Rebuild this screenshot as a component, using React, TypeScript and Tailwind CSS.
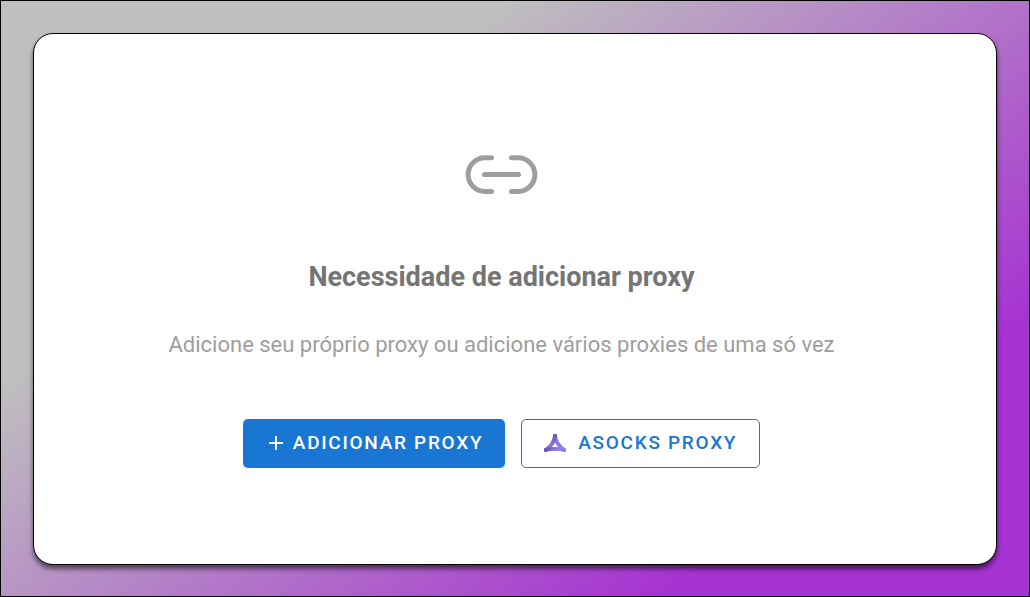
function LinkIcon() {
  return (
    <svg aria-hidden="true" viewBox="0 0 74 40" className="h-10 w-[74px]" fill="none" stroke="#9e9e9e" strokeWidth="5" strokeLinecap="round">
      <path d="M26.5 2.7H20a16.900 16.900 0 0 0 0 33.800h6.500" />
      <path d="M46.5 2.7H53a16.900 16.900 0 0 1 0 33.800h-6.500" />
      <path d="M19.500 19.600h34" />
    </svg>
  );
}

function PlusIcon() {
  return (
    <svg aria-hidden="true" viewBox="0 0 22 22" className="size-[22px]" fill="none" stroke="currentColor" strokeWidth="1.900">
      <path d="M11 4v14M4 11h14" />
    </svg>
  );
}

function AsocksLogo() {
  return (
    <svg aria-hidden="true" viewBox="0 0 22 18" className="h-[18px] w-[22px]" fill="none" strokeLinecap="round">
      <defs>
        <linearGradient id="asocks-left" x1="11" y1="0" x2="2" y2="17" gradientUnits="userSpaceOnUse">
          <stop offset="0" stopColor="#6858a8" />
          <stop offset="0.6" stopColor="#8a72d8" />
          <stop offset="1" stopColor="#6650b4" />
        </linearGradient>
        <linearGradient id="asocks-base" x1="1" y1="16" x2="21" y2="16" gradientUnits="userSpaceOnUse">
          <stop offset="0" stopColor="#6f5abf" />
          <stop offset="1" stopColor="#a38cf5" />
        </linearGradient>
      </defs>
      <path d="M1.800 16C6.500 14.400 15.500 14.400 20.200 16" stroke="url(#asocks-base)" strokeWidth="3.800" />
      <path d="M11 1.800C11.400 6.500 14.800 12.800 20.200 15.900" stroke="#927be3" strokeWidth="4" />
      <path d="M11 1.800C10.600 6.500 7.200 12.800 1.800 15.900" stroke="url(#asocks-left)" strokeWidth="4" />
    </svg>
  );
}

export default function App() {
  return (
    <main className="flex min-h-screen border border-black bg-[linear-gradient(143deg,#bfbfbf_28%,#a632d1_80%)] px-8 pt-8 pb-[31px] font-[Roboto,sans-serif]">
      <section className="flex grow flex-col items-center justify-center rounded-[20px] border border-black bg-white pr-[27px] shadow-[0_4px_5px_rgba(0,0,0,0.55)]">
        <div className="flex flex-col items-center pt-6 text-center">
          <LinkIcon />
          <h1 className="mt-16 text-[27px] leading-9 font-bold text-[#757575]">Necessidade de adicionar proxy</h1>
          <p className="mt-8 text-[22px] leading-9 text-[#9e9e9e]">
            Adicione seu próprio proxy ou adicione vários proxies de uma só vez
          </p>
        </div>
        <div className="mt-14 flex flex-wrap justify-center gap-4">
          <button type="button" className="flex h-[49px] items-center gap-1.5 rounded-[5px] bg-[#1976d2] px-[22px] text-[19px] font-medium tracking-[0.09em] text-white uppercase">
            <PlusIcon />
            Adicionar proxy
          </button>
          <button type="button" className="flex h-[49px] items-center gap-3 rounded-[5px] border border-[#1976d2] px-[22px] text-[19px] font-medium tracking-[0.09em] text-[#1976d2] uppercase">
            <AsocksLogo />
            Asocks proxy
          </button>
        </div>
      </section>
    </main>
  );
}
